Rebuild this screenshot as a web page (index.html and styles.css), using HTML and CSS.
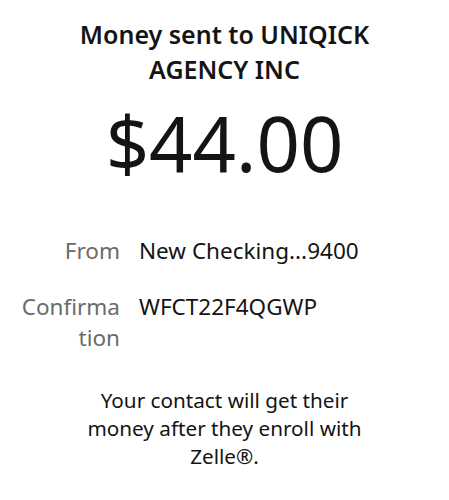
FILE: index.html
```html
<!DOCTYPE html>
<html lang="en">
<head>
    <meta charset="UTF-8">
    <meta name="viewport" content="width=device-width, initial-scale=1.0">
    <title>Money sent</title>
    <link rel="stylesheet" href="styles.css">
</head>
<body>
    <main class="receipt">
        <h1 class="receipt-title">Money sent to UNIQICK AGENCY INC</h1>
        <div class="receipt-amount">$44.00</div>

        <dl class="details">
            <dt>From</dt>
            <dd>New Checking...9400</dd>
            <dt>Confirmation</dt>
            <dd>WFCT22F4QGWP</dd>
        </dl>

        <p class="note">Your contact will get their money after they enroll with Zelle&reg;.</p>
    </main>
</body>
</html>
```

FILE: styles.css
```css
body {
    font-family: "Noto Sans", Arial, sans-serif;
    margin: 0;
    padding: 0;
    background-color: #fff;
    color: #141414;
}

.receipt {
    display: flex;
    flex-direction: column;
    align-items: center;
    padding: 17px 20px 0;
}

.receipt-title {
    font-size: 25px;
    font-weight: 600;
    line-height: 35px;
    text-align: center;
    margin: 0;
    width: 310px;
}

.receipt-amount {
    font-size: 76px;
    font-weight: 400;
    line-height: 90px;
    margin-top: 11px;
}

.details {
    align-self: stretch;
    display: grid;
    grid-template-columns: 100px 1fr;
    column-gap: 19px;
    row-gap: 25px;
    margin: 47px 0 0 0;
    font-size: 22.5px;
    line-height: 31px;
}

.details dt {
    color: #6b6b6b;
    text-align: right;
    word-break: break-all;
}

.details dd {
    margin: 0;
}

.note {
    font-size: 20.7px;
    line-height: 28px;
    text-align: center;
    margin: 33px 0 0;
    width: 300px;
}
```
